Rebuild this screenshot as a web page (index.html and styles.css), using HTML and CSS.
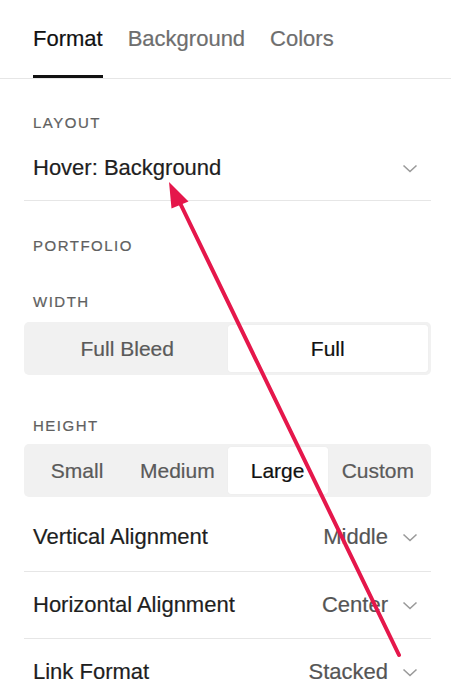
FILE: index.html
```html
<!DOCTYPE html>
<html>
<head>
<meta charset="utf-8">
<link rel="stylesheet" href="styles.css">
</head>
<body>
<div class="panel">
  <nav class="tabs">
    <div class="tab active">Format</div>
    <div class="tab">Background</div>
    <div class="tab">Colors</div>
  </nav>
  <div class="content">
    <div class="label first">LAYOUT</div>
    <div class="select-row layout-row">
      <span class="name">Hover: Background</span>
      <svg class="chev" width="16" height="9" viewBox="0 0 16 9"><path d="M1.5 1.5 L8 7.5 L14.5 1.5" fill="none" stroke="#9a9a9a" stroke-width="1.6"/></svg>
    </div>
    <div class="label portfolio">PORTFOLIO</div>
    <div class="label width">WIDTH</div>
    <div class="seg two">
      <div class="opt">Full Bleed</div>
      <div class="opt on">Full</div>
    </div>
    <div class="label height">HEIGHT</div>
    <div class="seg four">
      <div class="opt">Small</div>
      <div class="opt">Medium</div>
      <div class="opt on">Large</div>
      <div class="opt">Custom</div>
    </div>
    <div class="select-row r1">
      <span class="name">Vertical Alignment</span>
      <span class="val">Middle</span>
      <svg class="chev" width="16" height="9" viewBox="0 0 16 9"><path d="M1.5 1.5 L8 7.5 L14.5 1.5" fill="none" stroke="#9a9a9a" stroke-width="1.6"/></svg>
    </div>
    <div class="select-row r2">
      <span class="name">Horizontal Alignment</span>
      <span class="val">Center</span>
      <svg class="chev" width="16" height="9" viewBox="0 0 16 9"><path d="M1.5 1.5 L8 7.5 L14.5 1.5" fill="none" stroke="#9a9a9a" stroke-width="1.6"/></svg>
    </div>
    <div class="select-row r3">
      <span class="name">Link Format</span>
      <span class="val">Stacked</span>
      <svg class="chev" width="16" height="9" viewBox="0 0 16 9"><path d="M1.5 1.5 L8 7.5 L14.5 1.5" fill="none" stroke="#9a9a9a" stroke-width="1.6"/></svg>
    </div>
  </div>
  <svg class="arrow" width="451" height="700" viewBox="0 0 451 700">
    <line x1="399" y1="655" x2="180" y2="203" stroke="#e5174b" stroke-width="4" stroke-linecap="round"/>
    <polygon points="169,182 171.5,208.5 188.5,201.5" fill="#e5174b"/>
  </svg>
</div>
</body>
</html>
```
FILE: styles.css
```css
html, body {
  margin: 0;
  padding: 0;
  background: #fff;
}
body {
  font-family: "Liberation Sans", Arial, sans-serif;
  color: #1a1a1a;
  width: 451px;
  height: 700px;
  overflow: hidden;
  -webkit-text-stroke: 0.2px currentColor;
}
.panel {
  position: relative;
  width: 451px;
  height: 700px;
}
.tabs {
  display: flex;
  gap: 25px;
  padding-left: 33px;
  height: 78px;
  border-bottom: 1px solid #e6e6e6;
}
.tab {
  box-sizing: border-box;
  height: 78px;
  display: flex;
  align-items: center;
  font-size: 22px;
  color: #6e6e6e;
  padding-bottom: 1px;
}
.tab.active {
  color: #111;
  border-bottom: 3px solid #111;
  padding-top: 2px;
  padding-bottom: 0;
}
.content {
  padding: 0 20px 0 24px;
}
.label {
  padding-left: 9px;
  font-size: 15px;
  letter-spacing: 1.5px;
  color: #606060;
  line-height: 40px;
}
.label.first { margin-top: 24px; }
.label.portfolio { margin-top: 25px; }
.label.width { margin-top: 16px; }
.label.height { margin-top: 33px; line-height: 36px; }
.select-row {
  display: flex;
  align-items: center;
  padding: 0 13px 0 9px;
  font-size: 22px;
  line-height: 30px;
  color: #1e1e1e;
  border-bottom: 1px solid #e6e6e6;
}
.select-row .name { flex: 1; }
.select-row .val {
  color: #555;
  margin-right: 14px;
}
.select-row .chev { display: block; }
.layout-row { padding-top: 10px; padding-bottom: 17px; }
.r1 { padding-top: 25px; padding-bottom: 19px; }
.r2 { padding-top: 18px; padding-bottom: 18px; }
.r3 { padding-top: 18px; padding-bottom: 18px; border-bottom: none; }
.seg {
  display: grid;
  padding: 3px;
  height: 53px;
  box-sizing: border-box;
  background: #f1f1f1;
  border-radius: 5px;
}
.seg.two { grid-template-columns: 1fr 1fr; }
.seg.four { grid-template-columns: repeat(4, 1fr); }
.opt {
  display: flex;
  align-items: center;
  justify-content: center;
  font-size: 21px;
  color: #5a5a5a;
  border-radius: 3px;
}
.opt.on {
  background: #fff;
  color: #111;
  box-shadow: 0 0 1px rgba(0,0,0,0.08);
}
.arrow {
  position: absolute;
  left: 0;
  top: 0;
  pointer-events: none;
}
```
